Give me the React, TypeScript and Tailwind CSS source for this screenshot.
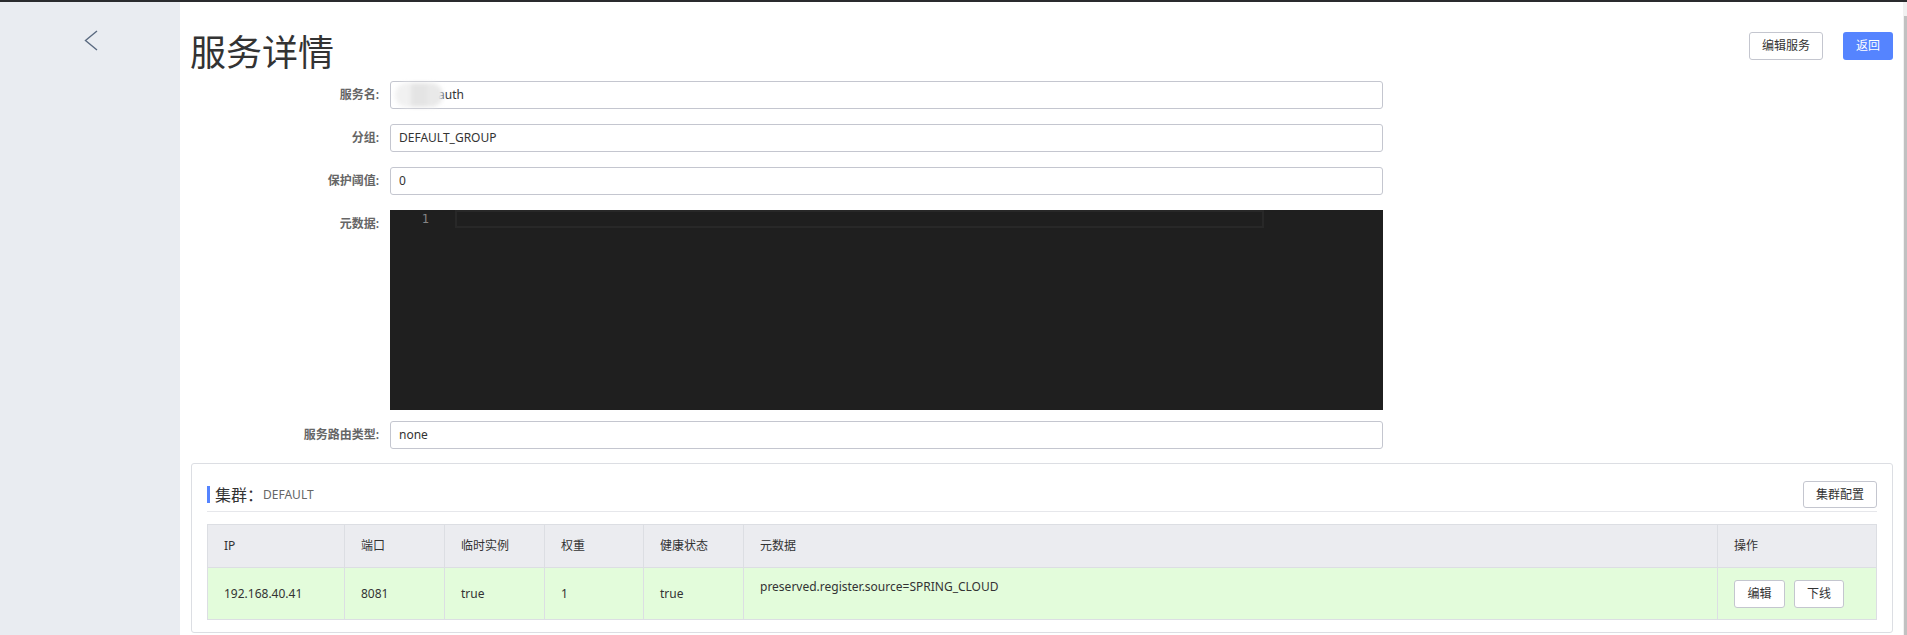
import React from "react";

const FONT = { fontFamily: '"Noto Sans", "Noto Sans CJK SC", sans-serif' };

function Field({ label, value, children }: { label: string; value?: React.ReactNode; children?: React.ReactNode }) {
  return (
    <div className="flex items-start">
      <div className="w-[200px] shrink-0 pr-[11px] text-right text-[12px] leading-[28px] font-semibold text-[#666]">{label}:</div>
      {children ?? (
        <div className="w-[993px] h-[28px] border border-[#c4c6cf] rounded-[3px] bg-white flex items-center pl-[8px] text-[12px] text-[#333]">
          {value}
        </div>
      )}
    </div>
  );
}

export default function App() {
  const cols = [
    { name: "IP", w: "w-[137px]" },
    { name: "端口", w: "w-[100px]" },
    { name: "临时实例", w: "w-[100px]" },
    { name: "权重", w: "w-[99px]" },
    { name: "健康状态", w: "w-[100px]" },
    { name: "元数据", w: "w-[974px]" },
    { name: "操作", w: "w-[159px]" },
  ];
  const td = "border border-[#dcdee3] pl-[16px]";
  return (
    <div className="w-[1907px] h-[635px] overflow-hidden flex flex-col bg-white" style={FONT}>
      <div className="h-[2px] bg-[#2a2b2e] shrink-0" />
      <div className="flex flex-1 min-h-0">
        <aside className="w-[180px] shrink-0 bg-[#e9ecf1] flex justify-center pt-[28px]">
          <svg width="14" height="21" viewBox="0 0 14 21" className="ml-[1px]">
            <polyline points="13,1 1.5,10.5 13,20" fill="none" stroke="#5a6a80" strokeWidth="1.4" />
          </svg>
        </aside>
        <main className="flex-1 min-w-0 pl-[10px] pr-[10px] flex flex-col">
          <div className="flex justify-between items-start pt-[29px] h-[79px]">
            <h1 className="text-[36px] leading-[44px] text-[#333] font-normal">服务详情</h1>
            <div className="flex gap-[20px] mt-[1px]">
              <button className="w-[74px] h-[28px] border border-[#c4c6cf] rounded-[3px] bg-white text-[12px] text-[#333]">编辑服务</button>
              <button className="w-[50px] h-[28px] rounded-[3px] bg-[#5584ff] text-[12px] text-white">返回</button>
            </div>
          </div>
          <div className="flex flex-col gap-[15px]">
            <Field
              label="服务名"
              value={
                <span className="flex items-center">
                  <span className="flex -ml-[4px] mr-[-5px] blur-[2px]">
                    <span className="w-[16px] h-[24px] bg-[#f1f1f1] rounded-l-full" />
                    <span className="w-[16px] h-[24px] bg-[#e4e4e4]" />
                    <span className="w-[16px] h-[24px] bg-[#e9e9e9] rounded-r-full" />
                  </span>
                  <span>auth</span>
                </span>
              }
            />
            <Field label="分组" value="DEFAULT_GROUP" />
            <Field label="保护阈值" value="0" />
            <Field label="元数据">
              <div className="w-[993px] h-[200px] bg-[#1f1f1f] flex items-start">
                <div className="w-[65px] text-right pr-[26px] text-[12px] leading-[18px] text-[#858585]" style={{ fontFamily: '"DejaVu Sans Mono", monospace' }}>1</div>
                <div className="w-[809px] h-[18px] border-2 border-[#282828]" />
              </div>
            </Field>
          </div>
          <div className="mt-[11px]">
            <Field label="服务路由类型" value="none" />
          </div>
          <section className="mt-[14px] ml-[1px] w-[1702px] border border-[#dcdee3] rounded-[3px] pt-[17px] px-[15px] pb-[12px]">
            <div className="flex items-center justify-between pb-[3px] border-b border-[#e6e7eb]">
              <div className="flex items-center">
                <span className="w-[3px] h-[17px] bg-[#5584ff]" />
                <span className="ml-[5px] text-[16px] text-[#333]">集群：</span>
                <span className="text-[12px] text-[#666]">DEFAULT</span>
              </div>
              <button className="w-[74px] h-[27px] border border-[#c4c6cf] rounded-[3px] bg-white text-[12px] text-[#333]">集群配置</button>
            </div>
            <table className="mt-[12px] w-[1669px] table-fixed border-collapse text-[12px] text-[#333]">
              <colgroup>
                {cols.map((c) => (
                  <col key={c.name} className={c.w} />
                ))}
              </colgroup>
              <thead>
                <tr className="bg-[#ebecf0] h-[43px]">
                  {cols.map((c) => (
                    <th key={c.name} className="border border-[#dcdee3] text-left font-normal pl-[16px]">{c.name}</th>
                  ))}
                </tr>
              </thead>
              <tbody>
                <tr className="bg-[#e3fcdb] h-[52px]">
                  <td className={td}>192.168.40.41</td>
                  <td className={td}>8081</td>
                  <td className={td}>true</td>
                  <td className={td}>1</td>
                  <td className={td}>true</td>
                  <td className={`${td} pb-[13px]`}>preserved.register.source=SPRING_CLOUD</td>
                  <td className={td}>
                    <div className="flex gap-[9px]">
                      <button className="w-[51px] h-[28px] border border-[#c4c6cf] rounded-[3px] bg-white text-[12px] text-[#333]">编辑</button>
                      <button className="w-[50px] h-[28px] border border-[#c4c6cf] rounded-[3px] bg-white text-[12px] text-[#333]">下线</button>
                    </div>
                  </td>
                </tr>
              </tbody>
            </table>
          </section>
        </main>
        <div className="w-[4px] shrink-0 bg-[#f1f1f1] flex flex-col">
          <div className="h-[14px]" />
          <div className="flex-1 w-[3px] ml-[1px] bg-[#c1c1c1]" />
        </div>
      </div>
    </div>
  );
}
